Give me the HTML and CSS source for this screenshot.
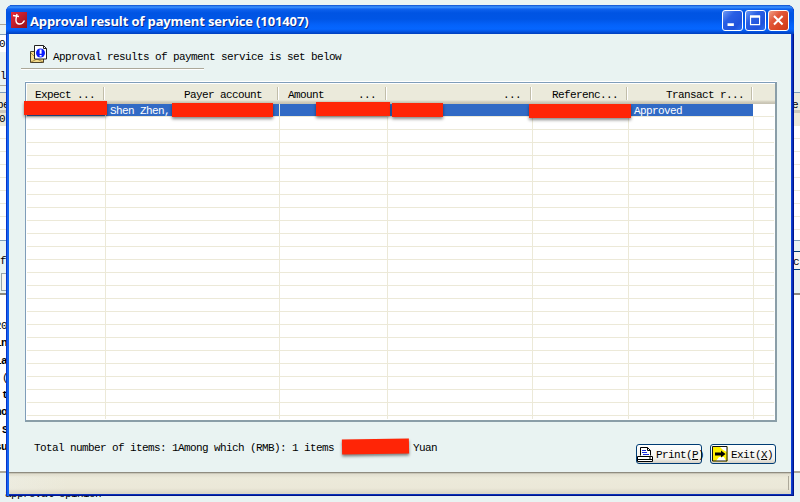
FILE: index.html
```html
<!DOCTYPE html>
<html lang="en">
<head>
<meta charset="utf-8">
<title>Approval result of payment service</title>
<link rel="stylesheet" href="styles.css">
</head>
<body>
<div class="desktop">
  <div class="back">
    <div class="b-top"></div>
    <div class="b-gap"></div>
    <div class="b-field">0</div>
    <div class="b-label"><span>l.</span></div>
    <div class="b-gap2"></div>
    <div class="b-head"><span>pe</span><span>e</span></div>
    <div class="b-sel">0</div>
    <div class="b-list"></div>
    <div class="b-tools"><div class="b-side"><span>f</span><i></i></div><b>c</b></div>
    <div class="b-doc">
      <div>20</div><div class="bold">in</div><div class="bold">la</div><div class="in">(</div><div class="bold in">t</div><div class="bold">no</div><div class="bold in">S</div><div class="bold">su</div>
    </div>
    <div class="b-foot">approval opinion</div>
  </div>

  <div class="window">
    <div class="titlebar">
      <svg class="logo" width="16" height="16" viewBox="0 0 16 16"><defs><linearGradient id="lg" x2="1" y2="1"><stop stop-color="#e6283a"/><stop offset="1" stop-color="#96121c"/></linearGradient></defs><rect width="16" height="16" fill="url(#lg)"/><path d="M6 2l-1 5q-.5 4.500 3 5q3.500.3 5.500-3.500M2 3.500l6 1" fill="none" stroke="#fff" stroke-width="1.400"/></svg>
      <h1>Approval result of payment service (101407)</h1>
      <div class="controls">
        <svg class="ctl" viewBox="0 0 21 21"><path d="M5 13.500h7v3H5z" fill="#fff"/></svg>
        <svg class="ctl" viewBox="0 0 21 21"><path d="M5 6.500h10v8.500H5z" fill="none" stroke="#fff" stroke-width="1.300"/><path d="M4.400 4.800h11.200v2.500H4.400z" fill="#fff"/></svg>
        <svg class="ctl close" viewBox="0 0 21 21"><path d="M5.500 5.500l9.500 9.500M15 5.500L5.500 15" stroke="#fff" stroke-width="2.200"/></svg>
      </div>
    </div>
    <div class="client">
      <div class="caption">
        <svg width="18" height="18" viewBox="0 0 18 18"><path d="M.5 6.500h13v11H.5z" fill="#f4dc8c" stroke="#49412d"/><path d="M1 8l6 6-6 3M7 14l6 3" fill="none" stroke="#a88a43"/><path d="M4.500.5h9l3 3v10.500h-12z" fill="#fff" stroke="#222"/><path d="M13.500.5v3h3" fill="none" stroke="#222"/><circle cx="10.500" cy="8" r="4.500" fill="#0a1cff"/><path d="M9.600 4.500h2v4.300h-2zM9.600 10h2v1.600h-2z" fill="#fff"/></svg>
        <span>Approval results of payment service is set below</span>
      </div>
      <div class="rule"></div>

      <div class="table">
        <div class="thead">
          <div class="th first">Expect ...</div>
          <div class="th right">Payer account</div>
          <div class="th split"><span>Amount</span><span>...</span></div>
          <div class="th right">...</div>
          <div class="th right">Referenc...</div>
          <div class="th right">Transact r...</div>
        </div>
        <div class="tbody">
          <div class="row"><span></span><span>Shen Zhen,</span><span></span><span></span><span></span><span>Approved</span></div>
          <div class="cells"><i></i><i></i><i></i><i></i><i></i><i></i></div>
        </div>
      </div>

      <div class="footer">
        <div class="totals">Total number of items: 1Among which (RMB): 1 items <span class="yuan">Yuan</span></div>
        <div class="buttons">
          <div class="btn"><svg width="17" height="17" viewBox="0 0 17 17"><path d="M3.500 9.500V1.500h7l3 3v5" fill="#fff" stroke="#000"/><path d="M10.500 1.500v3h3" fill="none" stroke="#000"/><path d="M5 4.500h4M5 6.500h5M6 8.500h6" stroke="#1a2bdc"/><path d="M.5 10.500h15v5H.5z" fill="#fff" stroke="#000"/><path d="M1 13.500h14M12 12h2" stroke="#000"/></svg><span>Print(<u>P</u>)</span></div>
          <div class="btn exit"><svg width="16" height="16" viewBox="0 0 16 16"><path d="M.5.5h15v15H.5z" fill="#ffef00"/><path d="M8 1h7v5l-4-2z" fill="#fff"/><path d="M7 11h5l2 4H4z" fill="#fff"/><path d="M.5.5h14.500v14.500H.5z" fill="none" stroke="#111"/><path d="M3 6.500h6V4.500l4.500 3.500L9 11.500v-2H3z"/></svg><span>Exit(<u>X</u>)</span></div>
        </div>
      </div>
      <div class="status"><div></div></div>
    </div>
  </div>

  <div class="redact r1"></div><div class="redact r2"></div><div class="redact r3"></div>
  <div class="redact r4"></div><div class="redact r5"></div><div class="redact r6"></div>
</div>
</body>
</html>
```
FILE: styles.css
```css
* { box-sizing: border-box; }
body { margin: 0; overflow: hidden; }
.desktop { position: relative; width: 800px; height: 502px; overflow: hidden; background: #e9f3f2;
  font: 11px/13px "Liberation Mono", monospace; letter-spacing: -0.6px; color: #000; }

/* window behind the dialog */
.back { display: flex; flex-direction: column; height: 502px; overflow: hidden; }
.b-top { height: 25px; width: 400px; border-bottom: 1px solid #aca899; }
.b-gap { height: 9px; }
.b-field { height: 18px; width: 400px; border-top: 1px solid #7f9db9; background: #fff; padding-top: 3px; text-indent: -1px; }
.b-label { height: 34px; width: 400px; padding-top: 18px; border-bottom: 1px solid #aca899; }
.b-gap2 { height: 6px; }
.b-head { height: 21px; border-top: 1px solid #7f9db9; border-bottom: 3px solid #cbc7b8; background: #ebeadb; display: flex; justify-content: space-between; padding: 6px 2px 0 0; }
.b-head span:first-child { margin-left: -3px; }
.b-sel { height: 13px; background: #ece9d8; text-indent: -1px; }
.b-list { height: 115px; border-bottom: 1px solid #7f9db9; background: repeating-linear-gradient(#fff 0 12px, #ece9d8 12px 13px); }
.b-tools { display: flex; justify-content: space-between; height: 54px; border-bottom: 2px solid #8d8a7e; }
.b-side { display: flex; flex-direction: column; padding-top: 14px; }
.b-side i { width: 20px; height: 18px; margin: 5px 0 0 1px; border: 1px solid #98a5aa; background: #f5f5f1; }
.b-tools b { width: 20px; height: 19px; margin-top: 10px; padding-top: 4px; text-indent: 13px; border: solid #003c74; border-width: 1px 0; background: #f5f5f1; font-weight: 400; }
.b-doc { height: 178px; padding-top: 25px; background: #fff; border-bottom: 2px solid #aca899; }
.b-doc div { height: 17.300px; margin-left: -5px; }
.b-doc .in { margin-left: 2px; }
.bold { font-weight: 700; }
.b-foot { padding: 15px 0 0 5px; }

.window { position: absolute; left: 6px; top: 5px; width: 788px; height: 491px; display: flex; flex-direction: column;
  padding: 0 3px 3px; border-radius: 7px 7px 0 0; background: #0b3fd8;
  box-shadow: inset 1px 0 #0833c9, inset 3px 0 #1464f0, inset -1px 0 #00138c, inset 0 -1px #00138c, inset -2px -2px #0830b8; }
.titlebar { height: 29px; margin: 0 -3px; padding: 5px 5px 0; display: flex; flex: none; align-items: flex-start; border-radius: 7px 7px 0 0;
  background: linear-gradient(#0a4ccc 0, #3b93ff 2px, #0e62ee 4px, #0054e3 8px, #0055e5 14px, #0462fa 20px, #0566ff 24px, #0558ea 26px, #003dbc 29px); }
.logo { margin-top: 2px; }
h1 { margin: 2px 0 0 3px; font: 700 13px/18px "Open Sans", sans-serif; color: #fff; text-shadow: 1px 1px #0a2a8c; white-space: nowrap; letter-spacing: -0.13px; }
.controls { margin-left: auto; display: flex; gap: 2px; }
.ctl { width: 21px; height: 21px; border: 1px solid #fff; border-radius: 3px; background: linear-gradient(135deg, #6f9bf5, #2a5fe4 35%, #1f52dc 75%, #2c70f2); }
.ctl.close { background: linear-gradient(135deg, #f0a188, #e2583a 35%, #d8431f 75%, #c8391a); }

.client { flex: 1; display: flex; flex-direction: column; background: #e9f3f2; }
.caption { display: flex; gap: 5px; height: 34px; padding: 11px 0 0 21px; }
.caption span { padding-top: 6px; }
.rule { width: 183px; height: 2px; margin-left: 12px; border-top: 1px solid #aca899; border-bottom: 1px solid #fff; }

.table { width: 752px; height: 340px; margin: 12px 0 0 16px; display: flex; flex-direction: column; border: 1px solid #7f9db9; border-right-width: 2px; border-bottom-width: 2px; border-bottom-color: #8a9ea8; border-right-color: #8a9ea8;
  background: #fff; padding: 1px 0 0 1px; box-shadow: 0 -1px #fff; }
.thead, .row, .cells { display: grid; grid-template-columns: 79px 174px 108px 145px 96px 125px; }
.thead { height: 20px; flex: none; background: linear-gradient(#ebeadb 0 16px, #dedbcb 17px, #d0ccbc 18px, #c5c1b1 20px); }
.th { position: relative; padding: 5px 18px 0 8px; white-space: nowrap; }
.th::after { content: ""; position: absolute; right: 1px; top: 3px; height: 13px; border-left: 1px solid #c1bda9; border-right: 1px solid #fff; }
.th.right { text-align: right; }
.th.split { display: flex; justify-content: space-between; padding-right: 12px; }
.th.right:nth-child(4) { padding-right: 12px; }
.th.right:nth-child(5) { padding-right: 11px; }
.th.right:last-child { padding-right: 10px; }
.tbody { flex: 1; width: 747px; display: flex; flex-direction: column; margin-bottom: 1px; background: repeating-linear-gradient(#fff 0 12px, #ece9d8 12px 13px); }
.row { height: 12px; width: 726px; background: #316ac5; color: #fff; }
.row span { padding: 1px 0 0 4px; line-height: 12px; border-right: 1px solid #ece9d8; }
.row span:last-child { border: 0; padding-left: 5px; }
.cells { flex: 1; }
.cells i { border-right: 1px solid #ece9d8; }

.footer { display: flex; justify-content: space-between; height: 50px; padding: 0 15px 0 25px; }
.totals { padding-top: 20px; white-space: pre; }
.yuan { margin-left: 73px; }
.buttons { display: flex; gap: 8px; padding-top: 22px; }
.btn { display: flex; width: 66px; height: 20px; border: 1px solid #003c74; border-radius: 3px; background: linear-gradient(#fff, #f2f1ec 75%, #d6d0c5); white-space: nowrap; }
.btn svg { flex: none; margin-top: 1px; }
.btn span { margin: 4px 0 0 2px; }
.btn.exit svg { margin-left: 1px; }
.btn.exit span { margin-left: 3px; }
.status { flex: 1; padding: 3px 2px 4px 0; border-top: 1px solid #8f8c80; box-shadow: inset 0 1px #c9c6b7;
  background: linear-gradient(#dedbcc 0, #eceada 5px, #ebe8d8 15px, #d8d4c4 21px); }
.status div { height: 14px; border-right: 1px solid #aca899; background: linear-gradient(90deg, #eef1ec55, transparent 60px); }

/* marker strokes laid over the sensitive values */
.redact { position: absolute; background: #ff2506; box-shadow: 0 2px 3px #0007; }
.r1 { left: 24px; top: 101px; width: 83px; height: 14px; }
.r2 { left: 172px; top: 103px; width: 101px; height: 14px; }
.r3 { left: 316px; top: 102px; width: 74px; height: 14px; }
.r4 { left: 392px; top: 103px; width: 51px; height: 14px; }
.r5 { left: 529px; top: 104px; width: 102px; height: 14px; }
.r6 { left: 342px; top: 439px; width: 67px; height: 15px; transform: rotate(-1deg); }
```
